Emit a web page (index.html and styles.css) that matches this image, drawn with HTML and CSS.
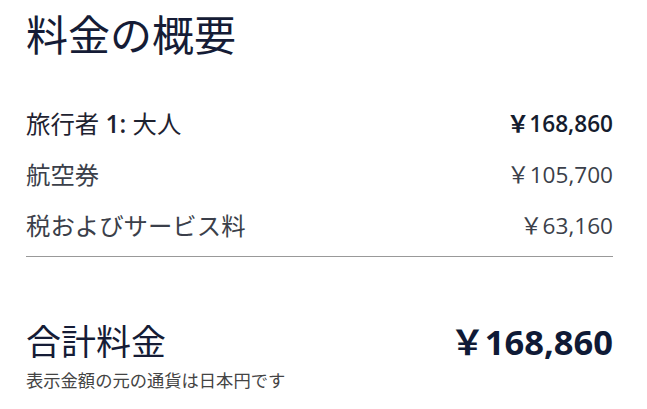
FILE: index.html
```html
<!DOCTYPE html>
<html lang="ja">
<head>
<meta charset="utf-8">
<link rel="stylesheet" href="styles.css">
</head>
<body>
<div class="summary">
  <h1 class="title">料金の概要</h1>
  <div class="rows">
    <div class="row row-main">
      <span class="label">旅行者 <b class="num">1:</b> 大人</span>
      <span class="amount strong">￥168,860</span>
    </div>
    <div class="row">
      <span class="label">航空券</span>
      <span class="amount">￥105,700</span>
    </div>
    <div class="row">
      <span class="label">税およびサービス料</span>
      <span class="amount">￥63,160</span>
    </div>
  </div>
  <hr class="divider">
  <div class="total">
    <span class="total-label">合計料金</span>
    <span class="total-amount">￥168,860</span>
  </div>
  <p class="note">表示金額の元の通貨は日本円です</p>
</div>
</body>
</html>
```
FILE: styles.css
```css
html, body { margin: 0; padding: 0; background: #fff; }
body { font-family: "Open Sans", "Noto Sans CJK JP", sans-serif; }
.summary { width: 587px; padding: 0 0 0 26px; }
.title {
  margin: 0;
  padding-top: 11px;
  font-size: 42px;
  line-height: 48px;
  font-weight: 400;
  color: #151c36;
}
.rows { margin-top: 38px; display: flex; flex-direction: column; }
.row {
  display: flex;
  justify-content: space-between;
  align-items: center;
  height: 51px;
  font-size: 24.4px;
  color: #3b3f4a;
}
.row-main { color: #1e2230; }
.label b { font-weight: 600; }
.amount { font-size: 22.6px; }
.strong { font-weight: 600; color: #151c2e; }
.divider { margin: 6px 0 0; border: 0; border-top: 1px solid #999; height: 0; }
.total {
  margin-top: 65px;
  display: flex;
  justify-content: space-between;
  align-items: center;
  color: #151c36;
}
.total-label { font-size: 35px; line-height: 40px; }
.total-amount { font-size: 34.5px; line-height: 40px; font-weight: 700; color: #0f1a36; }
.note { margin: 5px 0 0; font-size: 17.3px; color: #444; }
```
